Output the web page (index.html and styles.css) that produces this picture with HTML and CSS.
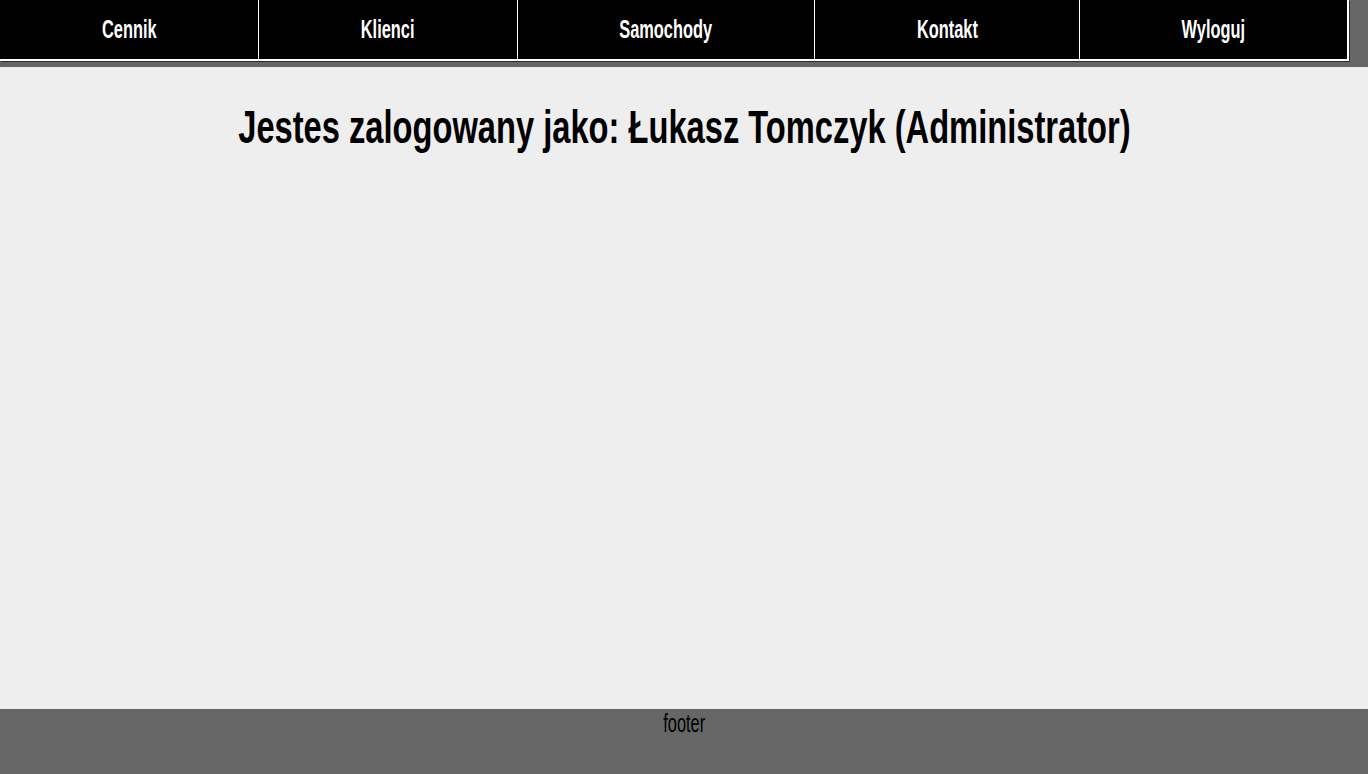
FILE: index.html
```html
<!DOCTYPE html>
<html lang="pl">
<head>
<meta charset="utf-8">
<title>Panel</title>
<link rel="stylesheet" href="styles.css">
</head>
<body>
<header class="top">
  <nav class="menu">
    <a class="item" href="#"><span class="sq">Cennik</span></a>
    <a class="item" href="#"><span class="sq">Klienci</span></a>
    <a class="item" href="#"><span class="sq">Samochody</span></a>
    <a class="item" href="#"><span class="sq">Kontakt</span></a>
    <a class="item" href="#"><span class="sq">Wyloguj</span></a>
  </nav>
</header>
<main class="content">
  <h1 class="title"><span class="sq sq-wide">Jestes zalogowany jako: Łukasz Tomczyk (Administrator)</span></h1>
</main>
<footer class="foot"><span class="sq">footer</span></footer>
</body>
</html>
```
FILE: styles.css
```css
html, body {
  margin: 0;
  padding: 0;
}
body {
  background: #eeeeee;
  font-family: "Liberation Sans", Arial, sans-serif;
  color: #000;
  height: 774px;
  display: flex;
  flex-direction: column;
  overflow: hidden;
}
.sq {
  display: inline-block;
  transform: scaleX(0.63);
  transform-origin: center;
  white-space: nowrap;
}
.sq-wide {
  transform: scaleX(0.71);
}
.top {
  background: #666666;
  height: 67px;
  flex: none;
}
.menu {
  width: 1347px;
  height: 59px;
  background: #000;
  display: grid;
  grid-template-columns: 258px 259px 297px 265px 268px;
  border-right: 2px solid #fff;
  border-bottom: 2px solid #fff;
  box-shadow: 1px 1px 0 #2a2a2a;
}
.item {
  display: flex;
  align-items: center;
  justify-content: center;
  color: #fff;
  text-decoration: none;
  font-weight: bold;
  font-size: 26px;
  border-left: 1px solid #fff;
  padding-bottom: 1px;
}
.item:first-child {
  border-left: none;
}
.content {
  flex: 1;
  text-align: center;
}
.title {
  margin: 25px 0 0;
  font-size: 46px;
  font-weight: bold;
  line-height: 70px;
}
.foot {
  flex: none;
  height: 65px;
  background: #666666;
  text-align: center;
  font-size: 26px;
  line-height: 28px;
  color: #000;
}
```
